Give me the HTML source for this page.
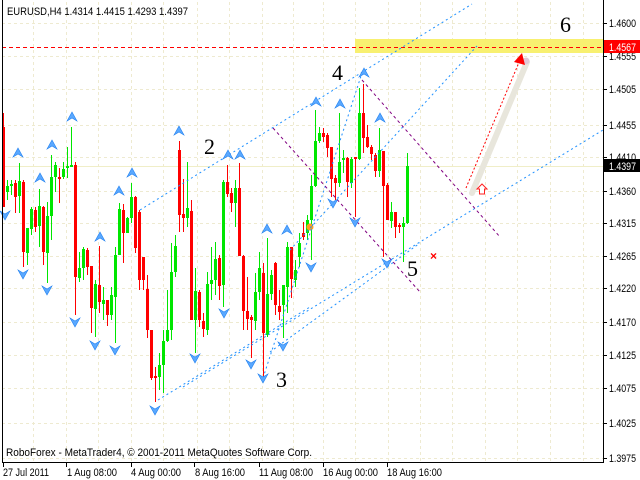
<!DOCTYPE html>
<html><head><meta charset="utf-8"><style>
html,body{margin:0;padding:0;background:#fff;width:640px;height:480px;overflow:hidden}
svg{display:block}
text{font-family:"Liberation Sans",sans-serif;font-size:11px;fill:#000}
.n{font-family:"Liberation Serif",serif;font-size:22px}
</style></head><body>
<svg width="640" height="480" viewBox="0 0 640 480" xmlns="http://www.w3.org/2000/svg">
<rect width="640" height="480" fill="#fff"/>
<g stroke="#eeead0" stroke-width="1" stroke-dasharray="3,3">
<path d="M33.5 2V462M66.5 2V462M98.5 2V462M131.5 2V462M163.5 2V462M197.5 2V462M229.5 2V462M262.5 2V462M293.5 2V462M323.5 2V462M355.5 2V462M388.5 2V462M420.5 2V462M452.5 2V462M485.5 2V462M517.5 2V462M550.5 2V462M583.5 2V462"/>
<path d="M2 23.5H603M2 56.5H603M2 89.5H603M2 125.5H603M2 157.5H603M2 191.5H603M2 223.5H603M2 256.5H603M2 288.5H603M2 322.5H603M2 355.5H603M2 388.5H603M2 423.5H603M2 458.5H603"/>
</g>
<rect x="355" y="39" width="248" height="14" fill="#f8f070"/>
<line x1="2" y1="166.5" x2="603" y2="166.5" stroke="#f0eec8"/>
<line x1="2" y1="47.5" x2="603" y2="47.5" stroke="#ff0000" stroke-dasharray="4,3"/>
<line x1="472" y1="193" x2="527" y2="62" stroke="#e8e6dc" stroke-width="6" stroke-linecap="round"/>
<circle cx="526" cy="61" r="3.5" fill="#e0c8d8"/>
<g>
<g fill="#ff0000">
<rect x="3" y="113" width="1" height="94"/><rect x="2" y="127" width="3" height="80"/>
<rect x="15" y="180" width="1" height="33"/><rect x="14" y="183" width="3" height="14"/>
<rect x="23" y="180" width="1" height="87"/><rect x="22" y="182" width="3" height="70"/>
<rect x="35" y="207" width="1" height="25"/><rect x="34" y="210" width="3" height="17"/>
<rect x="43" y="206" width="1" height="59"/><rect x="42" y="207" width="3" height="45"/>
<rect x="59" y="168" width="1" height="35"/><rect x="58" y="177" width="3" height="2"/>
<rect x="75" y="162" width="1" height="153"/><rect x="74" y="165" width="3" height="112"/>
<rect x="87" y="248" width="1" height="27"/><rect x="86" y="250" width="3" height="17"/>
<rect x="91" y="266" width="1" height="67"/><rect x="90" y="266" width="3" height="42"/>
<rect x="99" y="246" width="1" height="67"/><rect x="98" y="285" width="3" height="17"/>
<rect x="107" y="300" width="1" height="26"/><rect x="106" y="300" width="3" height="15"/>
<rect x="123" y="204" width="1" height="59"/><rect x="122" y="210" width="3" height="23"/>
<rect x="135" y="196" width="1" height="57"/><rect x="134" y="197" width="3" height="51"/>
<rect x="139" y="210" width="1" height="80"/><rect x="138" y="212" width="3" height="68"/>
<rect x="143" y="257" width="1" height="33"/><rect x="142" y="257" width="3" height="23"/>
<rect x="147" y="275" width="1" height="63"/><rect x="146" y="289" width="3" height="41"/>
<rect x="151" y="330" width="1" height="50"/><rect x="150" y="330" width="3" height="48"/>
<rect x="155" y="367" width="1" height="35"/><rect x="154" y="376" width="3" height="2"/>
<rect x="179" y="141" width="1" height="91"/><rect x="178" y="150" width="3" height="65"/>
<rect x="183" y="179" width="1" height="53"/><rect x="182" y="214" width="3" height="4"/>
<rect x="191" y="200" width="1" height="120"/><rect x="190" y="211" width="3" height="109"/>
<rect x="199" y="290" width="1" height="37"/><rect x="198" y="292" width="3" height="28"/>
<rect x="203" y="313" width="1" height="24"/><rect x="202" y="321" width="3" height="8"/>
<rect x="219" y="255" width="1" height="45"/><rect x="218" y="258" width="3" height="28"/>
<rect x="227" y="165" width="1" height="32"/><rect x="226" y="182" width="3" height="12"/>
<rect x="231" y="188" width="1" height="24"/><rect x="230" y="193" width="3" height="10"/>
<rect x="239" y="163" width="1" height="93"/><rect x="238" y="188" width="3" height="68"/>
<rect x="243" y="255" width="1" height="75"/><rect x="242" y="256" width="3" height="55"/>
<rect x="247" y="277" width="1" height="53"/><rect x="246" y="311" width="3" height="8"/>
<rect x="251" y="315" width="1" height="43"/><rect x="250" y="317" width="3" height="3"/>
<rect x="263" y="263" width="1" height="114"/><rect x="262" y="273" width="3" height="60"/>
<rect x="275" y="262" width="1" height="53"/><rect x="274" y="263" width="3" height="42"/>
<rect x="279" y="290" width="1" height="30"/><rect x="278" y="306" width="3" height="6"/>
<rect x="291" y="247" width="1" height="51"/><rect x="290" y="247" width="3" height="32"/>
<rect x="303" y="222" width="1" height="18"/><rect x="302" y="233" width="3" height="4"/>
<rect x="323" y="128" width="1" height="14"/><rect x="322" y="133" width="3" height="4"/>
<rect x="327" y="133" width="1" height="24"/><rect x="326" y="135" width="3" height="13"/>
<rect x="331" y="147" width="1" height="50"/><rect x="330" y="147" width="3" height="32"/>
<rect x="335" y="175" width="1" height="25"/><rect x="334" y="178" width="3" height="5"/>
<rect x="347" y="157" width="1" height="40"/><rect x="346" y="158" width="3" height="24"/>
<rect x="355" y="157" width="1" height="60"/><rect x="354" y="157" width="3" height="2"/>
<rect x="363" y="84" width="1" height="69"/><rect x="362" y="113" width="3" height="25"/>
<rect x="367" y="125" width="1" height="23"/><rect x="366" y="137" width="3" height="10"/>
<rect x="371" y="145" width="1" height="15"/><rect x="370" y="147" width="3" height="7"/>
<rect x="375" y="153" width="1" height="24"/><rect x="374" y="155" width="3" height="16"/>
<rect x="383" y="151" width="1" height="106"/><rect x="382" y="151" width="3" height="35"/>
<rect x="387" y="183" width="1" height="37"/><rect x="386" y="185" width="3" height="35"/>
<rect x="395" y="212" width="1" height="26"/><rect x="394" y="212" width="3" height="15"/>
<rect x="399" y="223" width="1" height="10"/><rect x="398" y="225" width="3" height="2"/>
</g>
<g fill="#00e600">
<rect x="7" y="180" width="1" height="20"/><rect x="6" y="186" width="3" height="6"/>
<rect x="11" y="180" width="1" height="15"/><rect x="10" y="184" width="3" height="2"/>
<rect x="19" y="163" width="1" height="50"/><rect x="18" y="181" width="3" height="15"/>
<rect x="27" y="228" width="1" height="37"/><rect x="26" y="228" width="3" height="25"/>
<rect x="31" y="207" width="1" height="28"/><rect x="30" y="209" width="3" height="20"/>
<rect x="39" y="189" width="1" height="58"/><rect x="38" y="206" width="3" height="20"/>
<rect x="47" y="202" width="1" height="81"/><rect x="46" y="216" width="3" height="37"/>
<rect x="51" y="155" width="1" height="85"/><rect x="50" y="177" width="3" height="39"/>
<rect x="55" y="162" width="1" height="30"/><rect x="54" y="165" width="3" height="12"/>
<rect x="63" y="162" width="1" height="17"/><rect x="62" y="169" width="3" height="8"/>
<rect x="67" y="147" width="1" height="31"/><rect x="66" y="166" width="3" height="2"/>
<rect x="71" y="127" width="1" height="40"/><rect x="70" y="165" width="3" height="2"/>
<rect x="79" y="252" width="1" height="30"/><rect x="78" y="268" width="3" height="10"/>
<rect x="83" y="247" width="1" height="33"/><rect x="82" y="249" width="3" height="19"/>
<rect x="95" y="280" width="1" height="57"/><rect x="94" y="284" width="3" height="25"/>
<rect x="103" y="287" width="1" height="33"/><rect x="102" y="300" width="3" height="4"/>
<rect x="111" y="287" width="1" height="33"/><rect x="110" y="295" width="3" height="20"/>
<rect x="115" y="247" width="1" height="96"/><rect x="114" y="255" width="3" height="42"/>
<rect x="119" y="203" width="1" height="52"/><rect x="118" y="209" width="3" height="46"/>
<rect x="127" y="217" width="1" height="16"/><rect x="126" y="218" width="3" height="15"/>
<rect x="131" y="183" width="1" height="40"/><rect x="130" y="197" width="3" height="21"/>
<rect x="159" y="353" width="1" height="37"/><rect x="158" y="365" width="3" height="12"/>
<rect x="163" y="330" width="1" height="63"/><rect x="162" y="341" width="3" height="24"/>
<rect x="167" y="290" width="1" height="52"/><rect x="166" y="330" width="3" height="11"/>
<rect x="171" y="243" width="1" height="97"/><rect x="170" y="272" width="3" height="58"/>
<rect x="175" y="235" width="1" height="42"/><rect x="174" y="246" width="3" height="26"/>
<rect x="187" y="162" width="1" height="65"/><rect x="186" y="208" width="3" height="10"/>
<rect x="195" y="268" width="1" height="85"/><rect x="194" y="291" width="3" height="29"/>
<rect x="207" y="272" width="1" height="63"/><rect x="206" y="284" width="3" height="46"/>
<rect x="211" y="247" width="1" height="53"/><rect x="210" y="280" width="3" height="4"/>
<rect x="215" y="242" width="1" height="53"/><rect x="214" y="259" width="3" height="21"/>
<rect x="223" y="180" width="1" height="127"/><rect x="222" y="182" width="3" height="103"/>
<rect x="235" y="180" width="1" height="47"/><rect x="234" y="188" width="3" height="15"/>
<rect x="255" y="273" width="1" height="57"/><rect x="254" y="292" width="3" height="29"/>
<rect x="259" y="252" width="1" height="48"/><rect x="258" y="268" width="3" height="24"/>
<rect x="267" y="238" width="1" height="99"/><rect x="266" y="294" width="3" height="41"/>
<rect x="271" y="270" width="1" height="30"/><rect x="270" y="275" width="3" height="19"/>
<rect x="283" y="285" width="1" height="53"/><rect x="282" y="285" width="3" height="20"/>
<rect x="287" y="242" width="1" height="71"/><rect x="286" y="247" width="3" height="40"/>
<rect x="295" y="260" width="1" height="27"/><rect x="294" y="270" width="3" height="10"/>
<rect x="299" y="233" width="1" height="34"/><rect x="298" y="243" width="3" height="14"/>
<rect x="307" y="215" width="1" height="25"/><rect x="306" y="220" width="3" height="13"/>
<rect x="311" y="175" width="1" height="85"/><rect x="310" y="186" width="3" height="34"/>
<rect x="315" y="110" width="1" height="77"/><rect x="314" y="141" width="3" height="45"/>
<rect x="319" y="127" width="1" height="16"/><rect x="318" y="133" width="3" height="8"/>
<rect x="339" y="113" width="1" height="74"/><rect x="338" y="162" width="3" height="21"/>
<rect x="343" y="150" width="1" height="23"/><rect x="342" y="158" width="3" height="2"/>
<rect x="351" y="157" width="1" height="31"/><rect x="350" y="159" width="3" height="24"/>
<rect x="359" y="88" width="1" height="72"/><rect x="358" y="113" width="3" height="46"/>
<rect x="379" y="128" width="1" height="49"/><rect x="378" y="150" width="3" height="21"/>
<rect x="391" y="202" width="1" height="26"/><rect x="390" y="212" width="3" height="9"/>
<rect x="403" y="217" width="1" height="45"/><rect x="402" y="223" width="3" height="4"/>
<rect x="407" y="153" width="1" height="71"/><rect x="406" y="166" width="3" height="57"/>
</g>
</g>
<circle cx="310" cy="227" r="3.5" fill="#ffa020"/>
<g stroke="#1e90ff" stroke-width="1" stroke-dasharray="2,3" fill="none">
<line x1="140" y1="210" x2="472" y2="4"/>
<line x1="183" y1="387" x2="603" y2="130"/>
<line x1="158" y1="400" x2="310" y2="307"/>
<line x1="270" y1="352" x2="420" y2="243"/>
<line x1="263" y1="378" x2="362" y2="73"/>
<line x1="290" y1="250" x2="477" y2="46"/>
</g>
<g stroke="#800080" stroke-width="1" stroke-dasharray="3,3" fill="none">
<line x1="273" y1="128" x2="420" y2="292"/>
<line x1="362" y1="80" x2="500" y2="237"/>
</g>
<line x1="466" y1="188" x2="520" y2="60" stroke="#ff0000" stroke-dasharray="2,2"/>
<path d="M522 53 L525 65 L514 62 Z" fill="#ff0000"/>
<path d="M482 184 L487 189 L484.5 189 L484.5 194 L479.5 194 L479.5 189 L477 189 Z" fill="#fff" stroke="#ff2020"/>
<text x="430" y="260" style="fill:#ff0000;font-size:12px;font-weight:bold">×</text>
<g fill="#5aa8ff" stroke="#2080f0" stroke-width="0.6">
<path d="M67 121L72 112L77 121L72 118Z"/><path d="M47 149L52 140L57 149L52 146Z"/>
<path d="M13 157L18 148L23 157L18 154Z"/><path d="M35 182L40 173L45 182L40 179Z"/>
<path d="M127 177L132 168L137 177L132 174Z"/><path d="M114 195L119 186L124 195L119 192Z"/>
<path d="M95 241L100 232L105 241L100 238Z"/><path d="M174 135L179 126L184 135L179 132Z"/>
<path d="M223 159L228 150L233 159L228 156Z"/><path d="M235 159L240 150L245 159L240 156Z"/>
<path d="M311 106L316 97L321 106L316 103Z"/><path d="M335 108L340 99L345 108L340 105Z"/>
<path d="M375 122L380 113L385 122L380 119Z"/><path d="M359 77L364 68L369 77L364 74Z"/>
<path d="M262 233L267 224L272 233L267 230Z"/><path d="M282 234L287 225L292 234L287 231Z"/>
<path d="M0 211L5 220L10 211L5 214Z"/><path d="M18 270L23 279L28 270L23 273Z"/>
<path d="M42 286L47 295L52 286L47 289Z"/><path d="M70 318L75 327L80 318L75 321Z"/>
<path d="M90 341L95 350L100 341L95 344Z"/><path d="M110 346L115 355L120 346L115 349Z"/>
<path d="M150 406L155 415L160 406L155 409Z"/><path d="M190 354L195 363L200 354L195 357Z"/>
<path d="M219 309L224 318L229 309L224 312Z"/><path d="M246 360L251 369L256 360L251 363Z"/>
<path d="M258 374L263 383L268 374L263 377Z"/><path d="M278 342L283 351L288 342L283 345Z"/>
<path d="M306 263L311 272L316 263L311 266Z"/><path d="M328 199L333 208L338 199L333 202Z"/>
<path d="M350 218L355 227L360 218L355 221Z"/><path d="M382 259L387 268L392 259L387 262Z"/>
</g>
<text class="n" x="204" y="154">2</text>
<text class="n" x="276" y="387">3</text>
<text class="n" x="332" y="80">4</text>
<text class="n" x="407" y="276">5</text>
<text class="n" x="560" y="32">6</text>
<path d="M2.5 0V462.5H603.5V0" fill="none" stroke="#000"/>
<text x="7" y="15" textLength="181" lengthAdjust="spacingAndGlyphs">EURUSD,H4  1.4314 1.4415 1.4293 1.4397</text>
<text x="6" y="456" textLength="306" lengthAdjust="spacingAndGlyphs">RoboForex - MetaTrader4, © 2001-2011 MetaQuotes Software Corp.</text>
<g stroke="#000"><path d="M603 23.5h4M603 56.5h4M603 89.5h4M603 125.5h4M603 157.5h4M603 191.5h4M603 223.5h4M603 256.5h4M603 288.5h4M603 322.5h4M603 355.5h4M603 388.5h4M603 423.5h4M603 458.5h4"/></g>
<g>
<text x="609" y="27" textLength="27" lengthAdjust="spacingAndGlyphs">1.4600</text>
<text x="609" y="60" textLength="27" lengthAdjust="spacingAndGlyphs">1.4555</text>
<text x="609" y="93" textLength="27" lengthAdjust="spacingAndGlyphs">1.4505</text>
<text x="609" y="129" textLength="27" lengthAdjust="spacingAndGlyphs">1.4455</text>
<text x="609" y="161" textLength="27" lengthAdjust="spacingAndGlyphs">1.4410</text>
<text x="609" y="195" textLength="27" lengthAdjust="spacingAndGlyphs">1.4360</text>
<text x="609" y="227" textLength="27" lengthAdjust="spacingAndGlyphs">1.4315</text>
<text x="609" y="260" textLength="27" lengthAdjust="spacingAndGlyphs">1.4265</text>
<text x="609" y="292" textLength="27" lengthAdjust="spacingAndGlyphs">1.4220</text>
<text x="609" y="326" textLength="27" lengthAdjust="spacingAndGlyphs">1.4170</text>
<text x="609" y="359" textLength="27" lengthAdjust="spacingAndGlyphs">1.4125</text>
<text x="609" y="392" textLength="27" lengthAdjust="spacingAndGlyphs">1.4075</text>
<text x="609" y="427" textLength="27" lengthAdjust="spacingAndGlyphs">1.4025</text>
<text x="609" y="462" textLength="27" lengthAdjust="spacingAndGlyphs">1.3975</text>
</g>
<rect x="604" y="40" width="36" height="13" fill="#ff0000"/>
<text x="609" y="51" textLength="27" lengthAdjust="spacingAndGlyphs" style="fill:#fff">1.4567</text>
<rect x="604" y="159" width="36" height="13" fill="#000"/>
<text x="609" y="170" textLength="27" lengthAdjust="spacingAndGlyphs" style="fill:#fff">1.4397</text>
<g stroke="#000"><path d="M3.5 462v5M66.5 462v5M131.5 462v5M194.5 462v5M259.5 462v5M323.5 462v5M387.5 462v5"/></g>
<text x="3" y="476" textLength="46" lengthAdjust="spacingAndGlyphs">27 Jul 2011</text>
<text x="67" y="476" textLength="50" lengthAdjust="spacingAndGlyphs">1 Aug 08:00</text>
<text x="131" y="476" textLength="50" lengthAdjust="spacingAndGlyphs">4 Aug 00:00</text>
<text x="195" y="476" textLength="50" lengthAdjust="spacingAndGlyphs">8 Aug 16:00</text>
<text x="259" y="476" textLength="54" lengthAdjust="spacingAndGlyphs">11 Aug 08:00</text>
<text x="323" y="476" textLength="55" lengthAdjust="spacingAndGlyphs">16 Aug 00:00</text>
<text x="387" y="476" textLength="55" lengthAdjust="spacingAndGlyphs">18 Aug 16:00</text>
</svg>
</body></html>
